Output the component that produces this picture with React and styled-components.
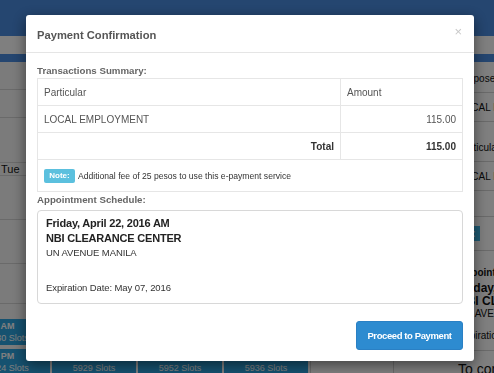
import styled, { createGlobalStyle } from "styled-components";

const GlobalStyle = createGlobalStyle`
  html, body {
    margin: 0;
    padding: 0;
  }
  body {
    width: 494px;
    height: 373px;
    overflow: hidden;
    font-family: "Liberation Sans", Arial, sans-serif;
    background: #ffffff;
  }
`;

const rows = [28, 28, 45, 13, 44, 44, 40];
const slotCols = [
  { am: "5930 Slots", pm: "5924 Slots" },
  { am: "5931 Slots", pm: "5929 Slots" },
  { am: "5950 Slots", pm: "5952 Slots" },
  { am: "5938 Slots", pm: "5936 Slots" },
];

const App = () => {
  return (
    <>
      <GlobalStyle />
      <StPage>
        <StNavBar />
        <StSubBar />
        <StMonthBar />
        <StContent>
          <StCalendar>
            {rows.map((h, i) => (
              <StCalRow key={i} h={h}>
                {i === 3 && <StDayName>Tue</StDayName>}
              </StCalRow>
            ))}
            <StCalRow h={15} $plain />
            <StSlotRow>
              {slotCols.map((c, i) => (
                <StSlot key={i}>
                  <b>AM</b>
                  <span>{c.am}</span>
                </StSlot>
              ))}
            </StSlotRow>
            <StSlotRow>
              {slotCols.map((c, i) => (
                <StSlot key={i}>
                  <b>PM</b>
                  <span>{c.pm}</span>
                </StSlot>
              ))}
              <StEmptyCell />
            </StSlotRow>
          </StCalendar>

          <StSide>
            <StSideTable>
              <StSideRow>Purpose</StSideRow>
              <StSideRow>LOCAL EMPLOYMENT</StSideRow>
            </StSideTable>
            <StSideTable>
              <StSideRow>Particular</StSideRow>
              <StSideRow>LOCAL EMPLOYMENT</StSideRow>
              <StSideRow h={25} />
              <StSideRow h={33}>
                <StSideNote>Note:</StSideNote>
              </StSideRow>
            </StSideTable>
            <StSideLabel>Appointment Schedule:</StSideLabel>
            <StSideStrong>Friday, April 22</StSideStrong>
            <StSideStrong>NBI CLEARANCE</StSideStrong>
            <StSideText>UN AVENUE MANILA</StSideText>
            <StSideRow h={30}>Expiration Date</StSideRow>
            <StSideBig>To complete</StSideBig>
          </StSide>
        </StContent>
      </StPage>

      <StBackdrop />

      <StModalLayer>
        <StDialog>
          <StHeader>
            <StTitle>Payment Confirmation</StTitle>
            <StClose>×</StClose>
          </StHeader>

          <StBody>
            <StLabel>Transactions Summary:</StLabel>
            <StTable>
              <tbody>
                <tr>
                  <StTd h={27}>Particular</StTd>
                  <StTd h={27} w={122}>Amount</StTd>
                </tr>
                <tr>
                  <StTd h={27}>LOCAL EMPLOYMENT</StTd>
                  <StTd h={27} align="right">115.00</StTd>
                </tr>
                <tr>
                  <StTd h={27} align="right" bold>Total</StTd>
                  <StTd h={27} align="right" bold>115.00</StTd>
                </tr>
                <tr>
                  <StTd h={32} colSpan={2}>
                    <StNoteLine>
                      <StBadge>Note:</StBadge>
                      Additional fee of 25 pesos to use this e-payment service
                    </StNoteLine>
                  </StTd>
                </tr>
              </tbody>
            </StTable>

            <StLabel top={1}>Appointment Schedule:</StLabel>
            <StSchedule>
              <StSchedTitle>Friday, April 22, 2016 AM</StSchedTitle>
              <StSchedTitle>NBI CLEARANCE CENTER</StSchedTitle>
              <StSchedText>UN AVENUE MANILA</StSchedText>
              <StSchedText top={21}>Expiration Date: May 07, 2016</StSchedText>
            </StSchedule>
          </StBody>

          <StFooter>
            <StPrimaryBtn>Proceed to Payment</StPrimaryBtn>
          </StFooter>
        </StDialog>
      </StModalLayer>
    </>
  );
};

export default App;

/* ---------- page under the modal ---------- */

const StPage = styled.div`
  width: 494px;
  height: 373px;
  overflow: hidden;
  background: #ffffff;
`;

const StNavBar = styled.div`
  height: 36px;
  background: #4a8ce0;
`;

const StSubBar = styled.div`
  height: 18px;
  background: #ffffff;
`;

const StMonthBar = styled.div`
  height: 8px;
  background: #4a8ce0;
`;

const StContent = styled.div`
  display: flex;
`;

const StCalendar = styled.div`
  width: 429px;
  margin-left: -35px;
  flex-shrink: 0;
  background: #f6f6f6;
`;

const StCalRow = styled.div`
  height: ${(p) => p.h}px;
  border-bottom: ${(p) => (p.$plain ? "none" : "1px solid #d4d4d4")};
  box-sizing: border-box;
  padding-left: 36px;
  display: flex;
  align-items: center;
`;

const StDayName = styled.span`
  font-size: 11px;
  color: #111;
`;

const StSlotRow = styled.div`
  display: grid;
  grid-template-columns: 85px 84px 84px 84px 84px;
  column-gap: 2px;
  margin-bottom: 4px;
  background: #ffffff;
`;

const StSlot = styled.div`
  height: 26px;
  background: #2ca4e0;
  color: #ffffff;
  font-size: 9px;
  display: flex;
  flex-direction: column;
  align-items: center;
  justify-content: center;
  line-height: 12px;
  b {
    font-weight: 700;
  }
`;

const StEmptyCell = styled.div`
  border-left: 1px solid #d4d4d4;
  border-right: 1px solid #d4d4d4;
`;

const StSide = styled.div`
  flex: 1;
  padding: 2px 0 0 64px;
  color: #111;
  font-size: 10px;
  white-space: nowrap;
  overflow: hidden;
`;

const StSideTable = styled.div`
  margin-bottom: 11px;
`;

const StSideRow = styled.div`
  height: ${(p) => p.h || 28}px;
  border-bottom: 1px solid #d4d4d4;
  display: flex;
  align-items: center;
`;

const StSideNote = styled.span`
  background: #3fb6e6;
  color: #fff;
  font-weight: 700;
  padding: 2px 4px;
  margin-left: -12px;
`;

const StSideLabel = styled.div`
  margin-top: -3px;
  padding: 8px 0 4px;
  font-weight: 700;
`;

const StSideStrong = styled.div`
  font-size: 12px;
  font-weight: 700;
  line-height: 13px;
`;

const StSideText = styled.div`
  font-size: 10px;
  line-height: 12px;
`;

const StSideBig = styled.div`
  font-size: 14px;
  padding-top: 10px;
`;

/* ---------- modal ---------- */

const StBackdrop = styled.div`
  position: fixed;
  inset: 0;
  background: rgba(0, 0, 0, 0.5);
`;

const StModalLayer = styled.div`
  position: fixed;
  inset: 0;
  padding: 15px 0 0 26px;
`;

const StDialog = styled.div`
  width: 448px;
  background: #ffffff;
  border-radius: 3px;
  box-shadow: 0 4px 14px rgba(0, 0, 0, 0.5);
  overflow: hidden;
`;

const StHeader = styled.div`
  height: 37px;
  padding: 0 11px;
  display: flex;
  align-items: center;
  justify-content: space-between;
  border-bottom: 1px solid #e5e5e5;
`;

const StTitle = styled.h4`
  margin: 3px 0 0;
  font-size: 11.2px;
  font-weight: 700;
  color: #555555;
`;

const StClose = styled.span`
  margin: -4px 1px 0 0;
  font-size: 13px;
  color: #c8c8c8;
  line-height: 1;
`;

const StBody = styled.div`
  padding: 11px 11px 8px;
`;

const StLabel = styled.div`
  margin-top: ${(p) => p.top || 0}px;
  height: 14px;
  line-height: 14px;
  font-size: 9.7px;
  font-weight: 700;
  color: #666666;
  margin-bottom: ${(p) => (p.top ? 3 : 0)}px;
`;

const StTable = styled.table`
  width: 100%;
  border-collapse: collapse;
  font-size: 10px;
  color: #555555;
`;

const StTd = styled.td`
  height: ${(p) => p.h}px;
  width: ${(p) => (p.w ? `${p.w}px` : "auto")};
  padding: 0 6px;
  border: 1px solid #e6e6e6;
  text-align: ${(p) => p.align || "left"};
  font-weight: ${(p) => (p.bold ? 700 : 400)};
  color: ${(p) => (p.bold ? "#333333" : "#555555")};
  vertical-align: middle;
  box-sizing: border-box;
`;

const StNoteLine = styled.div`
  display: flex;
  align-items: center;
  font-size: 8.6px;
  color: #333333;
`;

const StBadge = styled.span`
  display: inline-flex;
  align-items: center;
  justify-content: center;
  width: 31px;
  height: 14px;
  margin-right: 3px;
  border-radius: 2px;
  background: #5bc0de;
  color: #ffffff;
  font-weight: 700;
  font-size: 8px;
`;

const StSchedule = styled.div`
  border: 1px solid #d8d8d8;
  border-radius: 4px;
  padding: 5px 8px 8px;
`;

const StSchedTitle = styled.div`
  font-size: 11px;
  line-height: 15px;
  font-weight: 700;
  letter-spacing: -0.2px;
  color: #222222;
`;

const StSchedText = styled.div`
  margin-top: ${(p) => p.top || 0}px;
  font-size: 9.5px;
  line-height: 14px;
  color: #333333;
  letter-spacing: -0.1px;
`;

const StFooter = styled.div`
  display: flex;
  justify-content: flex-end;
  padding: 9px 11px 11px;
`;

const StPrimaryBtn = styled.button`
  width: 107px;
  height: 29px;
  border: 1px solid #2a80c4;
  border-radius: 3px;
  background: #2d8bd0;
  color: #ffffff;
  font-family: "Liberation Sans", Arial, sans-serif;
  font-size: 9.5px;
  font-weight: 700;
  letter-spacing: -0.4px;
  cursor: pointer;
  padding: 0;
`;
